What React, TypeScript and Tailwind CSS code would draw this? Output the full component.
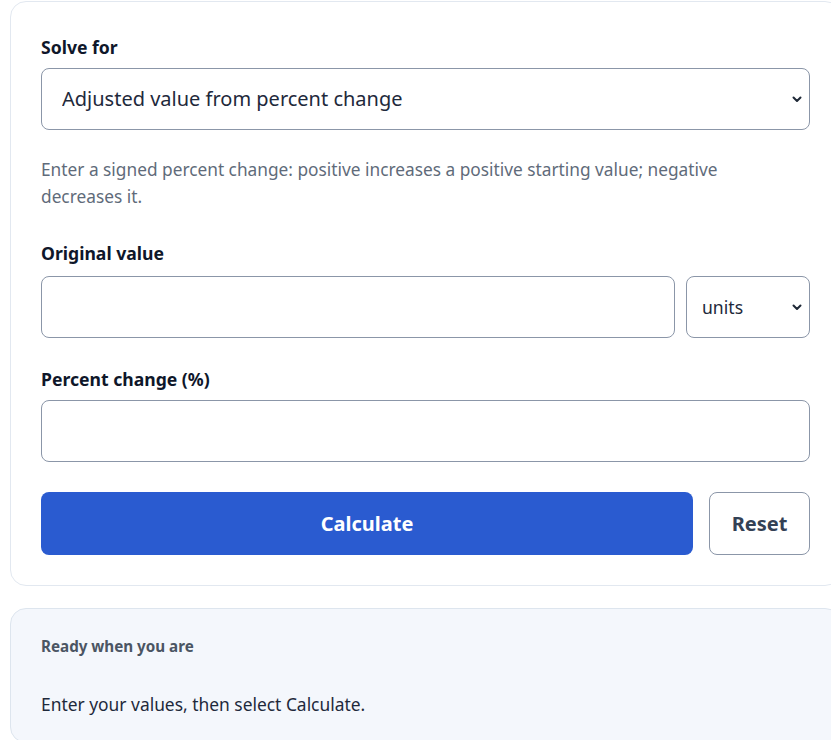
import { useState } from 'react';

const font = { fontFamily: '"Segoe UI", "Noto Sans", sans-serif' };

function Chevron() {
  return (
    <svg width="10" height="10" viewBox="0 0 10 10" className="pointer-events-none absolute right-[8px] top-1/2 -translate-y-1/2">
      <path d="M1.5 3.5 L5 7 L8.5 3.5" fill="none" stroke="#1f2937" strokeWidth="2" strokeLinecap="round" strokeLinejoin="round" />
    </svg>
  );
}

export default function App() {
  const [mode, setMode] = useState('adjusted');
  const [original, setOriginal] = useState('');
  const [unit, setUnit] = useState('units');
  const [pct, setPct] = useState('');
  const [result, setResult] = useState<string | null>(null);

  const calc = () => {
    const o = parseFloat(original);
    const p = parseFloat(pct);
    if (isNaN(o) || isNaN(p)) {
      setResult(null);
      return;
    }
    setResult(`${(o * (1 + p / 100)).toFixed(2)} ${unit}`);
  };

  const reset = () => {
    setOriginal('');
    setPct('');
    setResult(null);
  };

  return (
    <div className="min-h-screen w-full overflow-hidden bg-white text-[#0f172a]" style={font}>
      <div className="ml-[10px] w-[831px] pt-px">
        {/* Form card */}
        <div className="rounded-2xl border border-[#e2e8f0] bg-white px-[30px] pt-[34px] pb-[30px]">
          <label className="mb-[10px] block text-[17.6px] font-bold leading-[22px] text-[#0f172a]">Solve for</label>
          <div className="relative">
            <select
              value={mode}
              onChange={e => setMode(e.target.value)}
              className="h-[62px] w-full appearance-none rounded-lg border border-[#8b96a8] bg-white pl-5 pr-10 text-[20px] text-[#1e293b] outline-none"
            >
              <option value="adjusted">Adjusted value from percent change</option>
              <option value="percent">Percent change between two values</option>
              <option value="original">Original value from adjusted value</option>
            </select>
            <Chevron />
          </div>

          <p className="mt-[26px] pr-[40px] text-[17.3px] leading-[27px] text-[#5f6b7a]">
            Enter a signed percent change: positive increases a positive starting value; negative decreases it.
          </p>

          <label className="mt-[32px] mb-[12px] block text-[17.6px] font-bold leading-[22px] text-[#0f172a]">Original value</label>
          <div className="flex gap-[11px]">
            <input
              value={original}
              onChange={e => setOriginal(e.target.value)}
              className="h-[62px] min-w-0 flex-1 rounded-lg border border-[#8b96a8] bg-white px-4 text-[18px] outline-none"
            />
            <div className="relative w-[124px]">
              <select
                value={unit}
                onChange={e => setUnit(e.target.value)}
                className="h-[62px] w-full appearance-none rounded-lg border border-[#8b96a8] bg-white pl-[15px] pr-8 text-[17.6px] text-[#1e293b] outline-none"
              >
                <option value="units">units</option>
                <option value="$">$</option>
                <option value="kg">kg</option>
              </select>
              <Chevron />
            </div>
          </div>

          <label className="mt-[30px] mb-[10px] block text-[17.6px] font-bold leading-[22px] text-[#0f172a]">Percent change (%)</label>
          <input
            value={pct}
            onChange={e => setPct(e.target.value)}
            className="h-[62px] w-full rounded-lg border border-[#8b96a8] bg-white px-4 text-[18px] outline-none"
          />

          <div className="mt-[30px] flex gap-4">
            <button
              onClick={calc}
              className="h-[63px] flex-1 rounded-lg bg-[#2a5bd0] text-[20px] font-bold text-white"
            >
              Calculate
            </button>
            <button
              onClick={reset}
              className="h-[63px] w-[101px] rounded-lg border border-[#8b96a8] bg-white text-[20px] font-bold text-[#334155]"
            >
              Reset
            </button>
          </div>
        </div>

        {/* Result panel */}
        <div className="mt-[22px] rounded-2xl border border-[#dde5ee] bg-[#f4f7fc] px-[30px] pt-[27px] pb-[26px]">
          <div className="text-[15.2px] font-bold leading-[20px] text-[#4b5563]">Ready when you are</div>
          <div className="mt-[36px] text-[17.4px] leading-[24px] text-[#1e293b]">
            {result ? `Adjusted value: ${result}` : 'Enter your values, then select Calculate.'}
          </div>
        </div>
      </div>
    </div>
  );
}
